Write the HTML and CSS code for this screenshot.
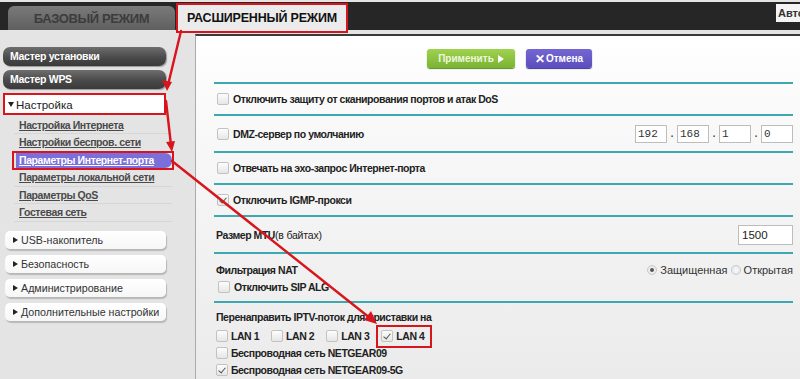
FILE: index.html
```html
<!DOCTYPE html>
<html lang="ru">
<head>
<meta charset="utf-8">
<title>Расширенный режим</title>
<link rel="stylesheet" href="styles.css">
</head>
<body>
<header class="topbar">
  <div class="tab tab-basic">БАЗОВЫЙ РЕЖИМ</div>
  <div class="tab tab-adv">РАСШИРЕННЫЙ РЕЖИМ</div>
  <div class="auto">Авто</div>
</header>
<div class="main">
  <nav class="sidebar">
    <div class="wiz">Мастер установки</div>
    <div class="wiz">Мастер WPS</div>
    <div class="open-section"><span class="tri-down"></span>Настройка</div>
    <ul class="sub">
      <li><a>Настройка Интернета</a></li>
      <li><a>Настройки беспров. сети</a></li>
      <li class="active"><a>Параметры Интернет-порта</a></li>
      <li><a>Параметры локальной сети</a></li>
      <li><a>Параметры QoS</a></li>
      <li><a>Гостевая сеть</a></li>
    </ul>
    <div class="section"><span class="tri-right"></span>USB-накопитель</div>
    <div class="section"><span class="tri-right"></span>Безопасность</div>
    <div class="section"><span class="tri-right"></span>Администрирование</div>
    <div class="section"><span class="tri-right"></span>Дополнительные настройки</div>
  </nav>
  <section class="content">
    <div class="actions">
      <button class="btn apply">Применить <span class="play"></span></button>
      <button class="btn cancel"><span class="x">✕</span>Отмена</button>
    </div>
    <div class="rows">
      <div class="row">
        <label class="opt"><span class="cb"></span>Отключить защиту от сканирования портов и атак DoS</label>
      </div>
      <div class="row row-tall">
        <label class="opt"><span class="cb"></span>DMZ-сервер по умолчанию</label>
        <div class="ip">
          <span class="ipbox">192</span><span class="dot">.</span>
          <span class="ipbox">168</span><span class="dot">.</span>
          <span class="ipbox">1</span><span class="dot">.</span>
          <span class="ipbox">0</span>
        </div>
      </div>
      <div class="row">
        <label class="opt"><span class="cb"></span>Отвечать на эхо-запрос Интернет-порта</label>
      </div>
      <div class="row">
        <label class="opt"><span class="cb checked"></span>Отключить IGMP-прокси</label>
      </div>
      <div class="row row-tall">
        <span class="lbl">Размер MTU<span class="thin">(в байтах)</span></span>
        <span class="mtu">1500</span>
      </div>
      <div class="row row-nat">
        <div class="line">
          <span class="lbl">Фильтрация NAT</span>
          <span class="radios"><span class="rb on"></span>Защищенная <span class="rb"></span>Открытая</span>
        </div>
        <label class="opt sip"><span class="cb"></span>Отключить SIP ALG</label>
      </div>
      <div class="row row-iptv">
        <span class="lbl">Перенаправить IPTV-поток для приставки на</span>
        <div class="lans">
          <label class="opt lan"><span class="cb"></span>LAN 1</label>
          <label class="opt lan"><span class="cb"></span>LAN 2</label>
          <label class="opt lan"><span class="cb"></span>LAN 3</label>
          <label class="opt lan lan-mark"><span class="cb checked"></span>LAN 4</label>
        </div>
        <label class="opt wl"><span class="cb"></span>Беспроводная сеть NETGEAR09</label>
        <label class="opt wl"><span class="cb checked"></span>Беспроводная сеть NETGEAR09-5G</label>
      </div>
    </div>
  </section>
</div>
<svg class="annot" width="800" height="379" viewBox="0 0 800 379">
  <g stroke="#d8141c" stroke-width="2.4" fill="none" stroke-linecap="round">
    <line x1="181" y1="31" x2="168" y2="85"/>
    <line x1="166" y1="101" x2="171" y2="145"/>
    <line x1="172" y1="161" x2="370" y2="318"/>
  </g>
  <g fill="#d8141c">
    <polygon points="167,91 162,80 172,82"/>
    <polygon points="172,152 166,142 175,141"/>
    <polygon points="377,324 364,320 371,311"/>
  </g>
</svg>
</body>
</html>
```

FILE: styles.css
```css
* { box-sizing: border-box; margin: 0; padding: 0; }

body {
  width: 800px;
  height: 379px;
  overflow: hidden;
  background: #e4e4e4;
  font-family: "Liberation Sans", Arial, sans-serif;
  color: #222;
  position: relative;
}

.topbar {
  display: flex;
  align-items: flex-end;
  height: 28px;
  margin-top: 2px;
  background: #262626;
  padding-left: 8px;
  position: relative;
}

.tab {
  height: 24px;
  display: flex;
  align-items: center;
  justify-content: center;
  font-weight: bold;
  border-radius: 6px 6px 0 0;
}

.tab-basic {
  width: 167px;
  background: linear-gradient(#7a7a7a, #5f5f5f);
  color: #3c3c3c;
  font-size: 13px;
  letter-spacing: -0.4px;
}

.tab-adv {
  width: 168px;
  margin-left: 3px;
  background: #ebebeb;
  color: #111;
  font-size: 12.5px;
  letter-spacing: -0.2px;
  border-radius: 0;
  outline: 2px solid #d8141c;
  height: 26px;
  margin-bottom: -1px;
}

.auto {
  margin-left: auto;
  align-self: flex-start;
  margin-top: 2px;
  width: 24px;
  height: 18px;
  background: #f4f4f4;
  font-size: 11px;
  font-weight: bold;
  color: #333;
  padding: 3px 0 0 2px;
  overflow: hidden;
  white-space: nowrap;
}

.main {
  display: flex;
  height: 349px;
}

.sidebar {
  width: 195px;
  padding-top: 17px;
  flex-shrink: 0;
}

.wiz {
  width: 163px;
  height: 19px;
  margin: 0 0 4px 3px;
  border-radius: 7px;
  background: linear-gradient(#6e6e6e, #4a4a4a 55%, #3a3a3a);
  box-shadow: 1px 1px 1px #9a9a9a;
  color: #fff;
  font-size: 10.5px;
  letter-spacing: -0.3px;
  font-weight: bold;
  padding: 3px 0 0 7px;
}

.open-section {
  width: 159px;
  height: 18px;
  margin: 6px 0 0 5px;
  background: #fff;
  outline: 2px solid #d8141c;
  font-size: 11.5px;
  color: #222;
  padding: 2px 0 0 3px;
  display: flex;
  align-items: center;
}

.tri-down {
  width: 0; height: 0;
  border-left: 3.5px solid transparent;
  border-right: 3.5px solid transparent;
  border-top: 5px solid #222;
  margin-right: 2px;
  margin-top: -1px;
}

.tri-right {
  width: 0; height: 0;
  border-top: 3.5px solid transparent;
  border-bottom: 3.5px solid transparent;
  border-left: 5px solid #222;
  margin-right: 3px;
}

.sub {
  list-style: none;
  padding-top: 3.5px;
  margin-left: 14px;
  width: 158px;
}

.sub li {
  height: 17.5px;
  border-bottom: 1px solid #d6d6d6;
  display: flex;
  align-items: center;
  padding-left: 5px;
  font-size: 10.5px;
  letter-spacing: -0.4px;
}

.sub li a {
  color: #4a4a4a;
  text-decoration: underline;
  font-weight: bold;
}

.sub li.active {
  margin: 1px 0;
  height: 15.5px;
  padding: 0;
  border-bottom: none;
  outline: 2px solid #d8141c;
}

.sub li.active a {
  color: #fff;
  display: flex;
  align-items: center;
  width: 100%;
  height: 100%;
  margin-left: 2px;
  padding-left: 3px;
  background: #7b6fdc;
  border-radius: 0 7px 7px 0;
}

.section {
  width: 161px;
  height: 18px;
  margin: 0 0 6px 5px;
  background: linear-gradient(#ffffff, #f6f6f6);
  border-radius: 5px;
  box-shadow: 1px 2px 1px #b8b8b8;
  font-size: 10.7px;
  color: #333;
  display: flex;
  align-items: center;
  padding-left: 8px;
}

.sub + .section { margin-top: 9.5px; }

.content {
  flex: 1;
  margin-top: 4px;
  background: linear-gradient(#ffffff, #fbfbfb 15%, #f2f2f2 60%, #ebebeb);
  border-top: 2px solid #3a3a3a;
  border-left: 1px solid #aaa;
}

.actions {
  height: 46px;
  padding: 13px 0 0 231px;
  display: flex;
  gap: 11px;
}

.btn {
  height: 19px;
  border: none;
  border-radius: 3px;
  font-family: inherit;
  font-size: 10px;
  font-weight: bold;
  color: #fff;
  display: flex;
  align-items: center;
  justify-content: center;
}

.apply {
  width: 88px;
  background: linear-gradient(#9fd24f, #7ab332);
  box-shadow: 0 1px 1px #5e8c24;
  color: #eef7df;
}

.play {
  width: 0; height: 0;
  border-top: 4px solid transparent;
  border-bottom: 4px solid transparent;
  border-left: 6px solid #fff;
  margin-left: 4px;
}

.cancel {
  width: 66px;
  background: linear-gradient(#7466d2, #5b4dbd);
  box-shadow: 0 1px 1px #3e3390;
}

.x { font-size: 12px; margin-right: 1px; }

.rows {
  margin: 0 7px 0 18px;
  border-top: 2px solid #3ea8b2;
}

.row {
  height: 32px;
  border-bottom: 2px solid #3ea8b2;
  display: flex;
  align-items: center;
  justify-content: space-between;
}

.row-tall { height: 37px; }

.opt, .lbl {
  font-weight: bold;
  color: #222;
  font-size: 10.5px;
  letter-spacing: -0.45px;
}

.opt {
  display: flex;
  align-items: center;
}

.cb {
  width: 12px;
  height: 12px;
  margin: 0 4px 0 3px;
  border: 1px solid #c2c2c2;
  border-radius: 2px;
  background: linear-gradient(#fdfdfd, #e6e6e6);
  position: relative;
  flex-shrink: 0;
}

.cb.checked::after {
  content: "";
  position: absolute;
  left: 3px;
  top: 1px;
  width: 3px;
  height: 6px;
  border-right: 1.6px solid #555;
  border-bottom: 1.6px solid #555;
  transform: rotate(40deg);
}

.ip {
  display: flex;
  align-items: center;
  font-family: "Liberation Mono", monospace;
  font-size: 11px;
  color: #333;
}

.ipbox {
  width: 32px;
  height: 18px;
  border: 1px solid #bdbdbd;
  background: #fff;
  padding: 2px 0 0 2px;
}

.dot { width: 10px; text-align: center; }

.lbl { padding-left: 2px; }

.thin { font-weight: normal; letter-spacing: -0.2px; }

.mtu {
  width: 55px;
  height: 20px;
  border: 1px solid #bdbdbd;
  background: #fff;
  font-size: 11.5px;
  padding: 3px 0 0 3px;
  color: #222;
}

.row-nat {
  height: 49px;
  flex-direction: column;
  align-items: stretch;
  justify-content: flex-start;
  padding-top: 8px;
  gap: 3px;
}

.line {
  display: flex;
  justify-content: space-between;
  align-items: center;
  height: 16px;
}

.sip { padding-left: 1px; }

.radios {
  display: flex;
  align-items: center;
  color: #333;
  font-size: 11px;
  white-space: pre;
}

.rb {
  width: 10px;
  height: 10px;
  border-radius: 50%;
  border: 1px solid #c8c8c8;
  background: radial-gradient(#fafafa, #e2e2e2);
  margin-right: 3px;
  position: relative;
}

.rb.on::after {
  content: "";
  position: absolute;
  left: 2px; top: 2px;
  width: 4px; height: 4px;
  border-radius: 50%;
  background: #555;
}

.row-iptv {
  height: auto;
  border-bottom: none;
  flex-direction: column;
  align-items: flex-start;
  justify-content: flex-start;
  padding-top: 6px;
}

.row-iptv > .lbl { height: 17px; line-height: 17px; }

.row-iptv > .opt { height: 16.5px; }

.wl .cb, .lan .cb { margin: 0 3px 0 2px; }

.lans {
  display: flex;
  height: 18px;
  align-items: center;
  margin-top: 1px;
}

.lan { margin-right: 10px; }

.lan-mark {
  outline: 2px solid #d8141c;
  outline-offset: 1px;
  padding: 0 5px 0 0;
  height: 17px;
}

.annot {
  position: absolute;
  left: 0;
  top: 0;
  pointer-events: none;
}
```
